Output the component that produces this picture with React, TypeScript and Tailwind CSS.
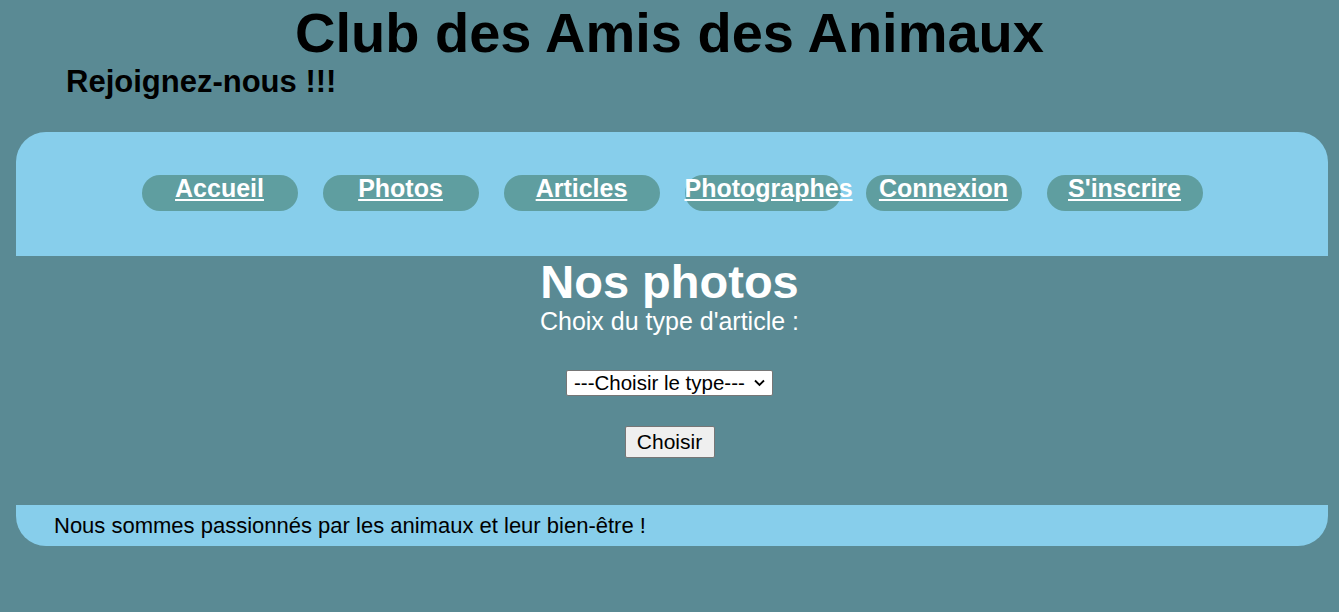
const links = ['Accueil', 'Photos', 'Articles', 'Photographes', 'Connexion', "S'inscrire"];

export default function App() {
  return (
    <div className="min-h-screen bg-[#5a8a94] font-['Liberation_Sans',Arial,sans-serif] leading-[1.15]">
      <header>
        <h1 className="pt-[5px] text-center text-[56px] font-bold leading-none text-black">
          Club des Amis des Animaux
        </h1>
        <h2 className="mt-[3px] pl-[66px] text-[31px] font-bold text-black">Rejoignez-nous !!!</h2>
      </header>

      <nav className="ml-4 mr-[11px] mt-[32px] h-[124px] rounded-t-[30px] bg-[#87ceeb] pt-[43px]">
        <ul className="flex justify-center gap-[25px]">
          {links.map((label) => (
            <li key={label}>
              <a
                href="#"
                className="block h-[36px] w-[156px] whitespace-nowrap rounded-full bg-[#5f9ea0] text-center text-[25px] font-bold leading-[1.1] text-white underline"
              >
                {label}
              </a>
            </li>
          ))}
        </ul>
      </nav>

      <main className="flex flex-col items-center text-white">
        <h1 className="text-[47px] font-bold leading-[1.12]">Nos photos</h1>
        <label htmlFor="type" className="text-[25px] leading-[1.1]">
          Choix du type d'article :
        </label>
        <div className="relative mt-[34px]">
          <select
            id="type"
            className="h-[26px] w-[207px] appearance-none rounded-[2px] border border-[#767676] bg-white pl-[7px] text-[20.5px] text-black"
            defaultValue=""
          >
            <option value="">---Choisir le type---</option>
          </select>
          <svg
            className="pointer-events-none absolute right-[8px] top-[9px]"
            width="11"
            height="8"
            viewBox="0 0 11 8"
            fill="none"
            stroke="#000"
            strokeWidth="1.8"
          >
            <path d="M1 1.5 L5.5 6 L10 1.5" />
          </svg>
        </div>
        <button className="mt-[30px] h-[32px] w-[90px] rounded-[2px] border border-[#767676] bg-[#efefef] text-[21px] text-black">
          Choisir
        </button>
      </main>

      <footer className="ml-4 mr-[11px] mt-[47px] flex h-[41px] items-center rounded-b-[30px] bg-[#87ceeb] pl-[38px] text-[22px] text-black">
        Nous sommes passionnés par les animaux et leur bien-être !
      </footer>
    </div>
  );
}
